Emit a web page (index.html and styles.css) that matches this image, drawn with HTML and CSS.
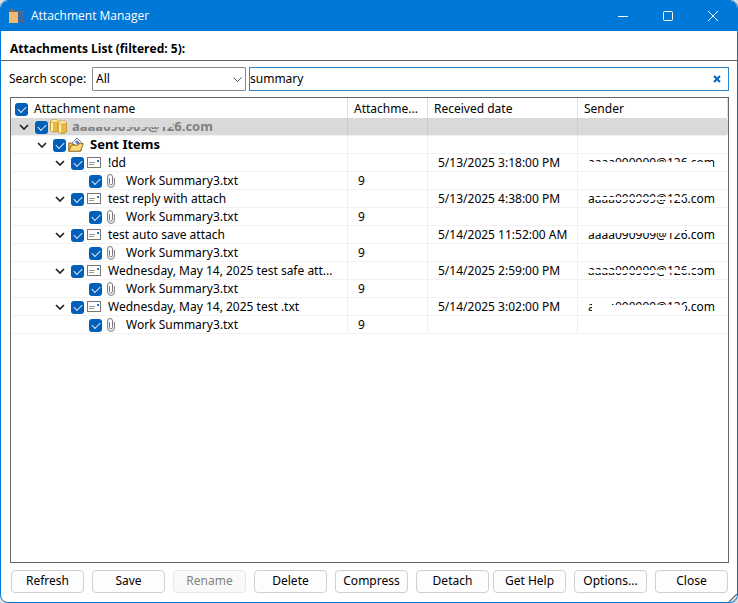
FILE: index.html
```html
<!DOCTYPE html>
<html lang="en">
<head>
<meta charset="utf-8">
<title>Attachment Manager</title>
<link rel="stylesheet" href="styles.css">
</head>
<body>
<svg class="defs" width="0" height="0" aria-hidden="true">
  <symbol id="chevron" viewBox="0 0 10 6"><path d="M1 1l4 4 4-4" fill="none" stroke="#222" stroke-width="1.7"/></symbol>
  <symbol id="mail" viewBox="0 0 14 11"><rect x=".5" y=".5" width="13" height="10" fill="#fff" stroke="#777"/><path d="M2 5.5h6M2 7.5h5" stroke="#999"/><path d="M10 3h2v2h-2z" fill="#2f6fb5"/></symbol>
  <symbol id="clip" viewBox="0 0 8 14"><path d="M2.5 4v5.500a1.500 1.500 0 0 0 3 0V3a2.400 2.400 0 0 0-4.900 0v7a3.400 3.400 0 0 0 6.800 0V4" fill="none" stroke="#777" stroke-width="1"/></symbol>
  <symbol id="store" viewBox="0 0 17 15"><path d="M.5 2v9.500c1 1.500 6 2 8 .5V2z" fill="#eab942" stroke="#c08a20" stroke-width=".7"/><path d="M2 3.500v8.500" stroke="#fff0b0" stroke-width="2"/><ellipse cx="4.500" cy="2" rx="4" ry="1.500" fill="#fff0b0" stroke="#c99529" stroke-width=".7"/><path d="M8 3.500V13c1.500 1.700 7 1.700 8.500 0V3.500z" fill="#eab942" stroke="#b98218" stroke-width=".7"/><path d="M10 5v8.500" stroke="#fff0b0" stroke-width="2.200"/><ellipse cx="12.200" cy="3.400" rx="4.200" ry="1.600" fill="#fff0b0" stroke="#c99529" stroke-width=".7"/></symbol>
  <symbol id="folder" viewBox="0 0 16 15"><path d="M.7 14V6h3l1 1.500H13V14z" fill="#f5c34d" stroke="#8c6b24"/><path d="M4 6l5-5 5 5-4 4z" fill="#f4f6ff" stroke="#7883a5"/><path d="M7 5l2-2 3 3-2 2z" fill="#697ab0"/><path d="M.7 14.200l3-6H10l1.200-1.500h4.200l-3 7.500z" fill="#ffda74" stroke="#94702a"/></symbol>
</svg>
<main class="window">
  <header class="titlebar">
    <svg class="app-icon" viewBox="0 0 17 15" aria-hidden="true"><path d="M0 0h5l1 2h9v3H0z" fill="#766c65"/><path d="M0 3h9v11H0z" fill="#edbc70"/><path d="M9 3h6v11H9z" fill="#4a6b9a"/><path d="M12 6v4a1 1 0 0 0 2 0V5a2 2 0 0 0-4 0v6a3 3 0 0 0 6 0V5" fill="none" stroke="#2c66b5"/></svg>
    <h1>Attachment Manager</h1>
    <button class="caption" aria-label="Minimize"><svg viewBox="0 0 10 10"><path d="M0 5.500h10"/></svg></button>
    <button class="caption" aria-label="Maximize"><svg viewBox="0 0 10 10"><rect x=".5" y=".5" width="9" height="9" rx="1"/></svg></button>
    <button class="caption" aria-label="Close window"><svg viewBox="0 0 10 10"><path d="M0 0l10 10M10 0L0 10"/></svg></button>
  </header>
  <h2>Attachments List (filtered: 5):</h2>
  <div class="search">
    <label for="scope">Search scope:</label>
    <div class="scope"><select id="scope"><option>All</option></select><svg viewBox="0 0 9 5" aria-hidden="true"><path d="M.5 .5l4 4 4-4"/></svg></div>
    <div class="query"><input type="text" value="summary" aria-label="Search text"><button aria-label="Clear search"><svg viewBox="0 0 8 8"><path d="M1 1l6 6M7 1L1 7"/></svg></button></div>
  </div>
  <section class="list">
    <table>
      <colgroup><col class="c-name"><col class="c-size"><col class="c-date"><col class="c-sender"></colgroup>
      <thead><tr><th><div class="cell"><input type="checkbox" checked aria-label="Select all"><span>Attachment name</span></div></th><th>Attachme...</th><th>Received date</th><th>Sender</th></tr></thead>
      <tbody id="rows"></tbody>
    </table>
  </section>
  <footer>
    <button>Refresh</button><button>Save</button><button disabled>Rename</button><button>Delete</button><button>Compress</button><button>Detach</button><button class="near">Get Help</button><button>Options...</button><button>Close</button>
  </footer>
  <svg class="grip" viewBox="0 0 9 9" aria-hidden="true"><path d="M1 9l8-8M5 9l4-4" stroke="#777" stroke-width="1.500"/></svg>
</main>
<script src="rows.js"></script>
</body>
</html>
```
FILE: rows.js
```js
const address = "aaaa090909@126.com";
const messages = [
  ["!dd", "5/13/2025 3:18:00 PM"],
  ["test reply with attach", "5/13/2025 4:38:00 PM"],
  ["test auto save attach", "5/14/2025 11:52:00 AM"],
  ["Wednesday, May 14, 2025 test safe att...", "5/14/2025 2:59:00 PM"],
  ["Wednesday, May 14, 2025 test .txt", "5/14/2025 3:02:00 PM"]
];
const use = (id) => `<svg class="${id}" aria-hidden="true"><use href="#${id}"/></svg>`;
function row(level, icon, name, size, date, sender) {
  const arrow = icon === "clip" ? "" : `<button class="toggle" aria-label="Collapse">${use("chevron")}</button>`;
  return `<tr class="level${level}"><td><div class="cell">${arrow}<input type="checkbox" checked aria-label="Select">${use(icon)}<span>${name}</span></div></td><td>${size}</td><td>${date}</td><td>${sender}</td></tr>`;
}
let html = row(0, "store", `<b class="veil veil0">${address}</b>`, "", "", "");
html += row(1, "folder", "Sent Items", "", "", "");
messages.forEach(([name, date], i) => {
  html += row(2, "mail", name, "", date, `<span class="veil veil${i + 1}">${address}</span>`);
  html += row(3, "clip", "Work Summary3.txt", "9", "", "");
});
document.getElementById("rows").innerHTML = html;
```
FILE: styles.css
```css
* { box-sizing: border-box; }
body { margin: 0; background: #ddd; color: #000; font: 12px/16px "Noto Sans", Tahoma, sans-serif; }
button, input, select { font: inherit; color: inherit; margin: 0; }
.defs { position: absolute; }
svg { display: block; flex: none; }
.window { position: relative; display: flex; flex-direction: column; height: 100vh; background: #fff; border: 1px solid #0078d7; border-radius: 8px; overflow: hidden; }
.titlebar { display: flex; align-items: center; height: 30px; padding: 0 2px 0 8px; background: #0078d7; color: #fff; }
.app-icon { width: 17px; height: 15px; margin-right: 5px; }
h1 { flex: 1; margin: 0; font: 12px/16px "Open Sans", sans-serif; }
.caption { width: 45px; height: 30px; padding: 0; border: 0; background: none; display: grid; place-items: center; }
.caption svg { width: 10px; height: 10px; fill: none; stroke: #fff; overflow: visible; }
h2 { margin: 0; height: 30px; padding: 10px 9px 0; font: 700 12px/16px "Open Sans", sans-serif; border-bottom: 1px solid #666; }
.search { display: flex; height: 36px; padding: 6px 8px; gap: 3px; }
.search label { width: 80px; line-height: 24px; }
.scope { position: relative; width: 154px; }
.scope select { width: 100%; height: 24px; padding: 0 3px; appearance: none; background: #fff; border: 1px solid #888; border-radius: 1px; }
.scope svg { position: absolute; right: 4px; top: 10px; width: 9px; height: 5px; fill: none; stroke: #555; overflow: visible; }
.query { flex: 1; display: flex; align-items: center; height: 24px; border: 1px solid #3089cf; }
.query input { flex: 1; min-width: 0; padding: 0; border: 0; outline: 0; background: none; }
.query button { padding: 0 7px; border: 0; background: none; }
.query svg { width: 8px; height: 8px; stroke: #0067c0; stroke-width: 2; overflow: visible; }
.list { flex: 1; margin: 0 8px 0 9px; border: 1px solid #666; overflow: hidden; }
table { width: 100%; border-collapse: separate; border-spacing: 0; table-layout: fixed; }
.c-name { width: 337px; }
.c-size { width: 80px; }
.c-date { width: 150px; }
th, td { padding: 0 0 0 10px; text-align: left; font-weight: 400; white-space: nowrap; border-right: 1px solid #f0f0f0; }
th { height: 20px; padding: 2px 0 0 6px; border-color: #e0e0e0; }
td { height: 18px; line-height: 17px; border-bottom: 1px solid #f2f2f2; }
td:last-child { border-right: 0; }
th:first-child, td:first-child { padding-left: 0; }
.cell { display: flex; align-items: center; height: 17px; }
th .cell { padding-left: 4px; }
th .cell span { margin-left: 6px; }
input[type="checkbox"] { appearance: none; flex: none; width: 13px; height: 13px; border-radius: 3px; background: #005fb8; display: grid; place-items: center; }
td input[type="checkbox"] { margin-top: 1px; }
input[type="checkbox"]::after { content: ""; width: 7px; height: 4px; border: solid #e6eff8; border-width: 0 0 1px 1px; transform: translateY(-1px) rotate(-45deg); }
.toggle { padding: 0; border: 0; background: none; margin-right: 6px; }
.chevron { width: 10px; height: 6px; }
.level0 .cell { padding-left: 8px; }
.level1 .cell { padding-left: 26px; }
.level2 .cell { padding-left: 44px; }
.level3 .cell { padding-left: 78px; }
.level0 td { background: #d9d9d9; border-right-color: #ccc; }
.level0 td:last-child { border-radius: 0 3px 3px 0; }
.level0 span { color: #808080; font-size: 13px; }
.level1 span { font-weight: 700; font-size: 13px; }
.store { width: 17px; height: 15px; margin: 0 5px 0 2px; }
.folder { width: 16px; height: 15px; margin: 0 6px 0 2px; }
.mail { width: 14px; height: 11px; margin: 0 7px 0 3px; }
.clip { width: 8px; height: 14px; margin: 0 11px 0 5px; }
.veil { position: relative; display: inline-block; }
.veil::after { content: ""; position: absolute; left: 7px; right: 30px; top: 5px; height: 4px; background: #fff; }
.veil0::after { left: 8px; right: 40px; top: 4px; height: 5px; background: #d9d9d9; }
.veil1::after { left: 0; right: 2px; top: 8px; height: 8px; }
.veil2::after { top: 7px; height: 3px; }
.veil3::after { left: 0; top: 2px; height: 5px; }
.veil4::after { left: 0; right: 16px; top: 8px; height: 3px; }
.veil5::after { left: 4px; top: 0; height: 16px; clip-path: polygon(0 0, 20px 0, 20px 7px, 100% 7px, 100% 100%, 0 100%); }
footer { display: flex; padding: 7px 9px 9px 10px; gap: 8px; }
footer button { flex: 1; height: 23px; padding: 0 0 1px; line-height: 20px; background: #fdfdfd; border: 1px solid #d0d0d0; border-radius: 4px; white-space: nowrap; }
footer button:disabled { color: #838383; background: #f9f9f9; border-color: #e8e8e8; }
footer .near { margin-left: -4px; }
.grip { position: absolute; right: 0; bottom: 0; width: 9px; height: 9px; }
```
